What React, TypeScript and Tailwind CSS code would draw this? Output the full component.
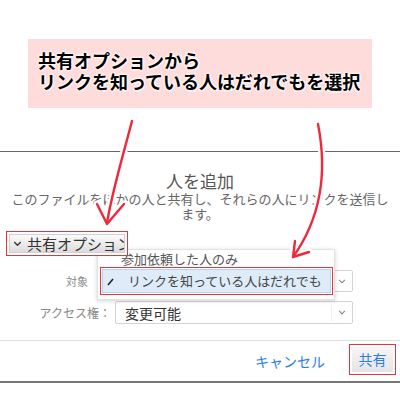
import React from 'react'

// Share dialog screenshot with annotation callout + hand-drawn arrows

const FONT = "font-['Noto_Sans_CJK_JP','Noto_Sans',sans-serif]"

function Chevron({ className = '', w = 8 }: { className?: string; w?: number }) {
  return (
    <svg width={w} height={w * 0.6} viewBox="0 0 8 5" className={className}>
      <polyline points="1,1 4,4 7,1" fill="none" stroke="currentColor" strokeWidth="1.2" />
    </svg>
  )
}

function Arrows() {
  const paths = [
    'M132 121 C 124 152, 112 192, 107 223',
    'M97 204 L 107 224 L 124 204',
    'M318 124 C 327 170, 323 215, 293 257',
    'M295 241 L 293 257 L 309 252',
  ]
  return (
    <svg className="pointer-events-none absolute left-0 top-0 z-30" width={400} height={400}>
      {paths.map(d => (
        <path key={'w' + d} d={d} fill="none" stroke="#fff" strokeWidth={7} strokeLinecap="round" strokeLinejoin="round" />
      ))}
      {paths.map(d => (
        <path key={'r' + d} d={d} fill="none" stroke="#f0283c" strokeWidth={2.4} strokeLinecap="round" strokeLinejoin="round" />
      ))}
    </svg>
  )
}

function SelectBox({ value }: { value?: string }) {
  return (
    <div className="flex h-full w-[238px] items-center rounded-[2px] border border-[#d4d4d4] bg-white">
      <span className="flex-1 pl-[9px] text-[14px] leading-none text-[#333]">{value}</span>
      <span className="h-[16px] w-px bg-[#eee]" />
      <span className="flex w-[20px] justify-center text-[#888]">
        <Chevron />
      </span>
    </div>
  )
}

export default function App() {
  return (
    <div className={`relative h-[400px] w-[400px] overflow-hidden bg-white ${FONT}`}>
      <div className="pt-[39px]">
        {/* callout */}
        <div className="mx-[28px] h-[69px] bg-[#ffdcdc] pl-[10px] pt-[11px] text-[18px] font-bold leading-[21px] text-black [text-shadow:0_0_2px_#fff,0_0_2px_#fff,0_0_3px_#fff,0_0_3px_#fff]">
          <div>共有オプションから</div>
          <div>リンクを知っている人はだれでもを選択</div>
        </div>

        {/* dialog */}
        <div className="mt-[43px] border-t border-[#666]">
          <div className="pt-[19px] text-center text-[17px] leading-[20px] text-[#555]">人を追加</div>
          <div className="mx-auto w-[378px] text-center text-[13px] leading-[15px] text-[#666]">
            このファイルをほかの人と共有し、それらの人にリンクを送信します。
          </div>

          <div className="mt-[10px] pl-[6px]">
            <div className="relative z-20 flex h-[25px] w-[122px] border-[1.5px] border-[#e8323c] bg-white p-[2px]">
              <div className="flex flex-1 items-center overflow-hidden whitespace-nowrap border border-[#d0d0d0] bg-gradient-to-b from-[#fbfbfb] to-[#dcdcdc] pl-[3px] text-[15px] leading-none text-[#333]">
                <Chevron w={9} className="mr-[5px] shrink-0 text-[#333]" />
                共有オプション
              </div>
            </div>
          </div>

          <div className="mt-[14px] flex h-[22px] items-center">
            <span className="w-[115px] pr-[27px] text-right text-[11px] text-[#888]">対象</span>
            <SelectBox />
          </div>

          <div className="mt-[9px] flex h-[23px] items-center">
            <span className="w-[115px] pr-[4px] text-right text-[12px] text-[#888]">アクセス権：</span>
            <SelectBox value="変更可能" />
          </div>

          <div className="mt-[16px] flex h-[43px] items-center justify-end border-y border-t-[#ddd] border-b-[#777] border-b-2 pr-[4px]">
            <span className="text-[14px] text-[#2b7de9]">キャンセル</span>
            <div className="ml-[24px] mb-[4px] flex h-[31px] w-[47px] border-[1.5px] border-[#e8323c] p-[2px]">
              <div className="flex flex-1 items-center justify-center bg-gradient-to-b from-[#f6f6f6] to-[#e4e4e4] text-[14px] text-[#2b7de9]">
                共有
              </div>
            </div>
          </div>
        </div>
      </div>

      {/* dropdown menu */}
      <div className="absolute left-[97px] top-[249px] z-10 h-[51px] w-[238px] border border-[#e2e2e2] bg-white shadow-[0_1px_4px_rgba(0,0,0,0.18)]">
        <div className="h-[17px] pl-[23px] pt-[1px] text-[13px] leading-[16px] text-[#555]">参加依頼した人のみ</div>
        <div className="ml-[2px] h-[28px] w-[233px] border-[1.5px] border-[#e8323c] p-[1px]">
          <div className="flex h-full items-center border border-[#b8d3ec] bg-[#deebf8] pl-[4px] text-[13px] text-[#444]">
            <svg width="8" height="9" viewBox="0 0 8 9" className="mr-[13px]">
              <path d="M1 8 L 6 2" stroke="#222" strokeWidth="1.6" fill="none" />
            </svg>
            リンクを知っている人はだれでも
          </div>
        </div>
      </div>

      <Arrows />
    </div>
  )
}
